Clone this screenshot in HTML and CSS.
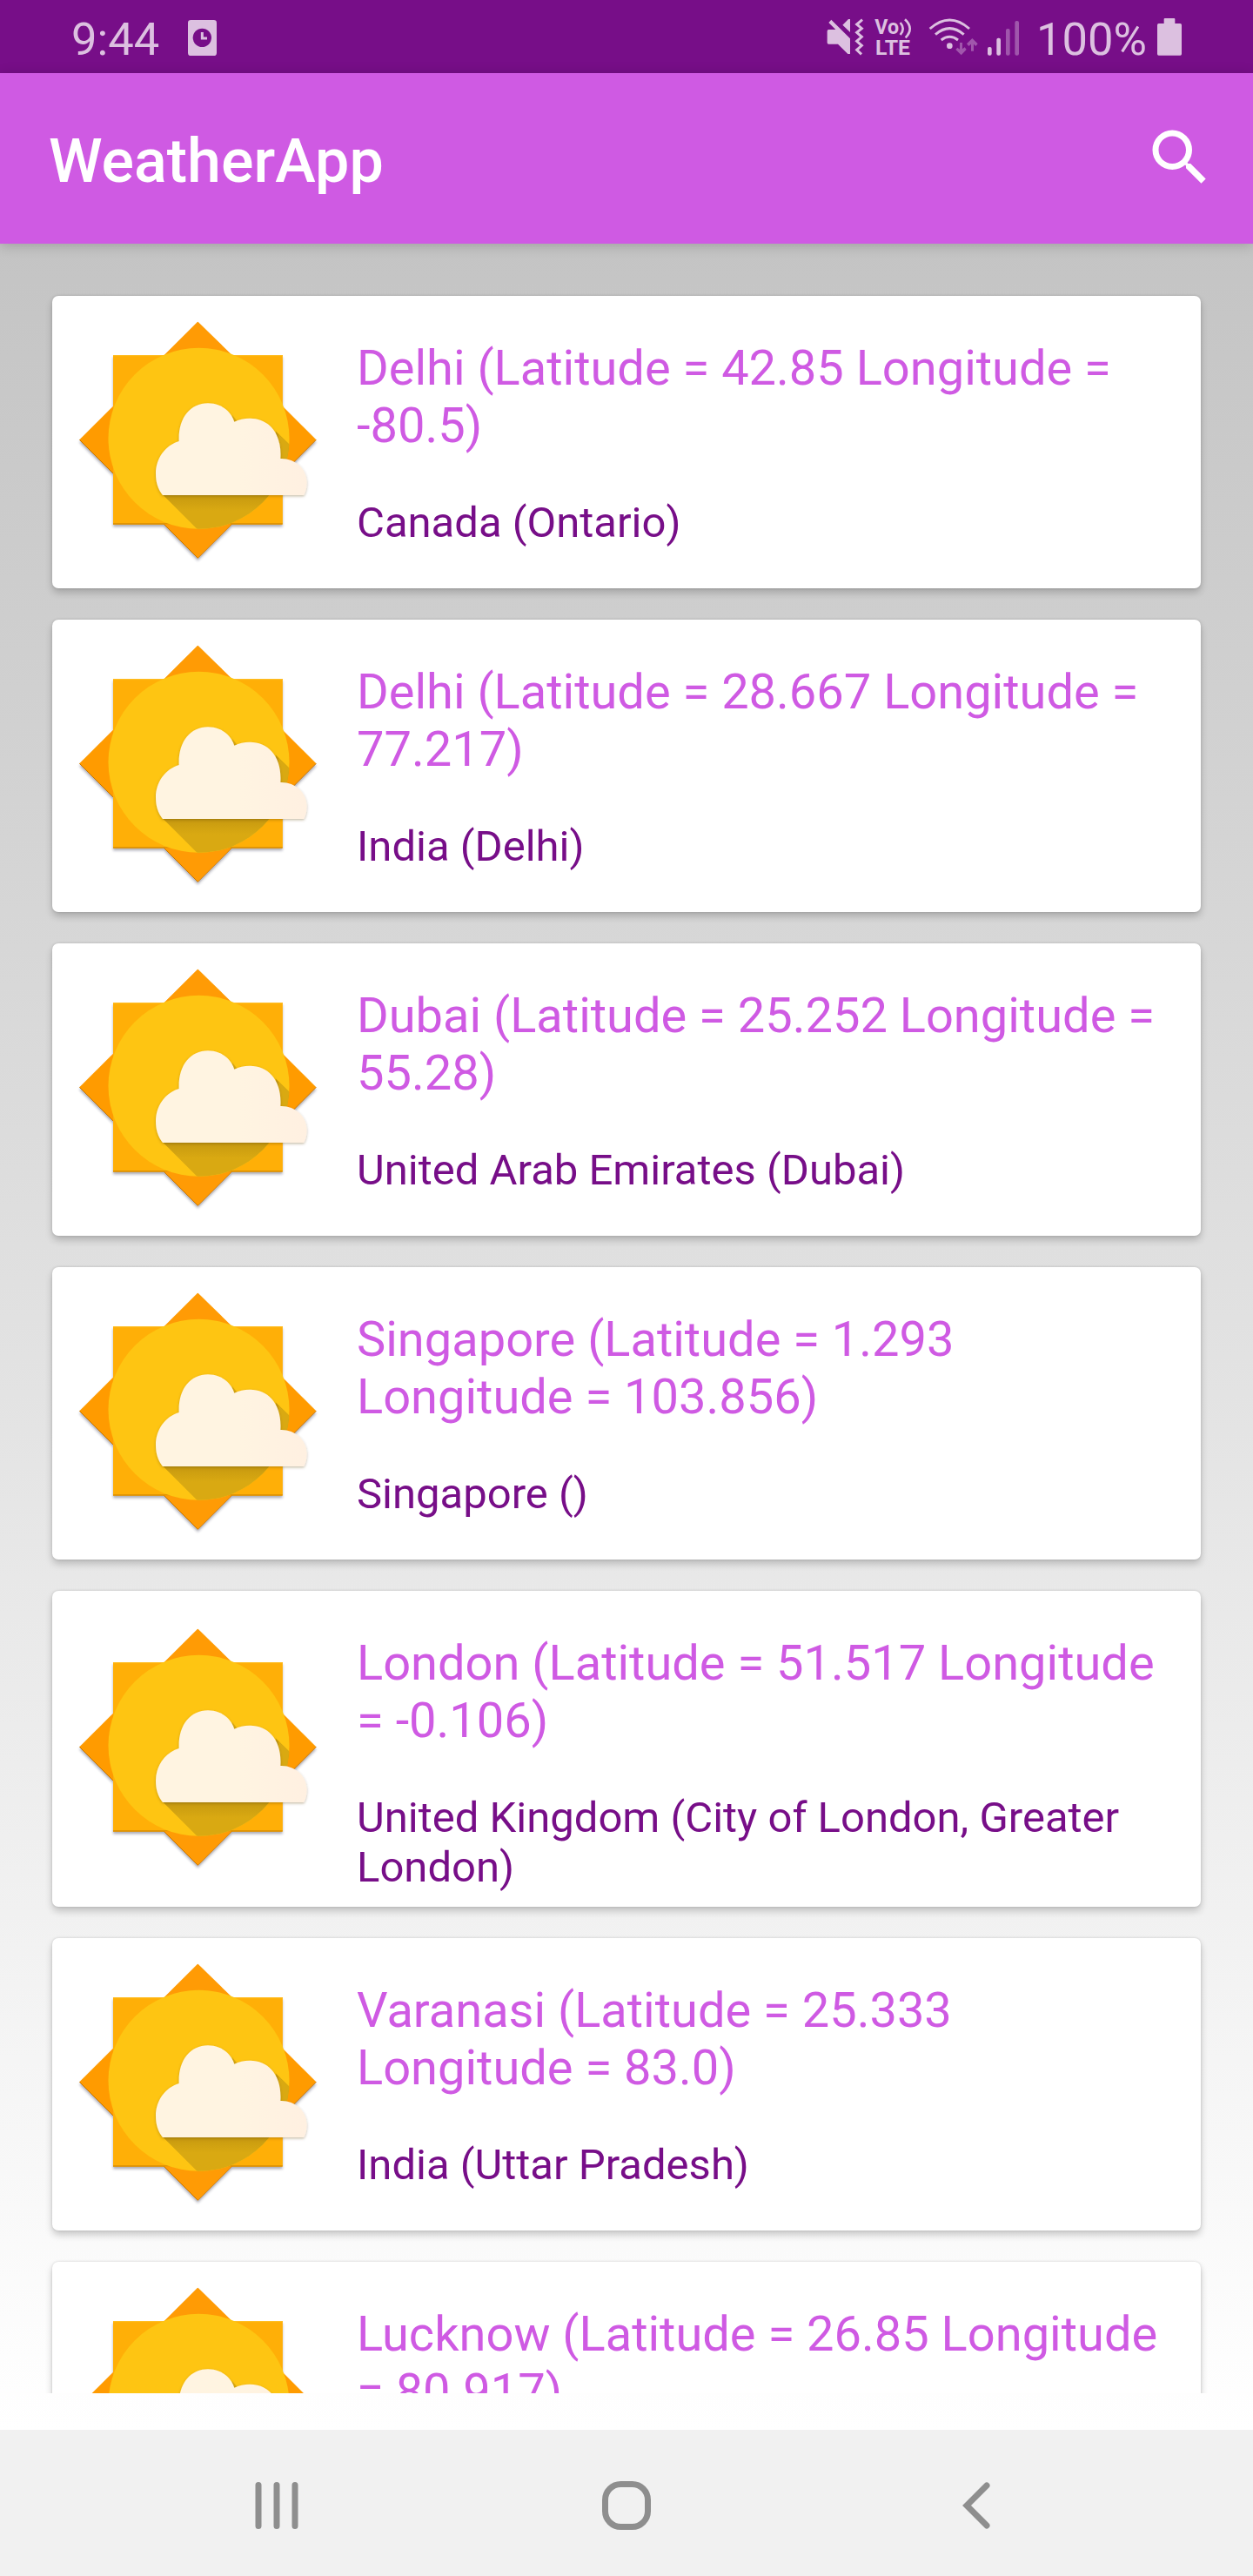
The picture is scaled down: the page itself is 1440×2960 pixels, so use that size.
FILE: index.html
```html
<!DOCTYPE html>
<html lang="en">
<head>
<meta charset="utf-8">
<title>WeatherApp</title>
<link rel="stylesheet" href="styles.css">
</head>
<body>
<svg class="defs" aria-hidden="true">
  <defs>
    <filter id="soft" x="-10%" y="-10%" width="120%" height="125%">
      <feDropShadow dx="0" dy="9" stdDeviation="5" flood-color="#2a2040" flood-opacity="0.38"/>
    </filter>
    <filter id="cloud-shadow" x="-10%" y="-10%" width="120%" height="125%">
      <feDropShadow dx="0" dy="4" stdDeviation="4" flood-color="#5a3c00" flood-opacity="0.35"/>
    </filter>
    <linearGradient id="cloud-fill" x1="0" y1="0" x2="1" y2="0">
      <stop offset="0.55" stop-color="#fff4e1"/>
      <stop offset="1" stop-color="#fff0e1"/>
    </linearGradient>
    <linearGradient id="shade" x1="0" y1="740" x2="0" y2="800" gradientUnits="userSpaceOnUse">
      <stop offset="0" stop-color="#c4970f"/>
      <stop offset="1" stop-color="#d9a912"/>
    </linearGradient>
    <clipPath id="disc"><circle cx="565.500" cy="551.500" r="312"/></clipPath>
    <symbol id="sun" viewBox="144 132 840 864">
      <g filter="url(#soft)">
        <path d="M562 149 970 556 562 964 154 556Z" fill="#ff9b05"/>
        <path d="M270 264H854V847H270Z" fill="#ffaf07"/>
      </g>
      <path d="M154 556 562 964 970 556" fill="none" stroke="#c67500" stroke-width="3"/>
      <path d="M270 264H854V847H270Z" fill="#ffaf07"/>
      <path d="M270 846H854" stroke="#d78b00" stroke-width="4"/>
      <path d="M447 847 562 962 678 847Z" fill="#ff9b05"/>
      <path d="M270 266H854" stroke="#ffc02a" stroke-width="3"/>
      <path d="M447 264 562 149 680 264Z" fill="#ff9b05"/>
      <circle cx="565.500" cy="551.500" r="312" fill="#fec512"/>
      <g clip-path="url(#disc)">
        <path d="M442 746 600 904H900V594L830 526 840 650 800 746Z" fill="url(#shade)"/>
        <path d="M840 536 900 594V640H840Z" fill="#d9a912"/>
        <path d="M680 470 700 494 680 500Z" fill="#d9a912"/>
      </g>
      <path filter="url(#cloud-shadow)" fill="url(#cloud-fill)" d="M441 747C424 726 417 702 417 673C417 620 450 575 497 561C494 482 535 430 597 430C640 430 675 455 688 494C704 486 721 482 742 482C805 482 853 532 847 621C895 619 938 655 938 703C938 720 935 735 928 747Z"/>
    </symbol>
  </defs>
</svg>

<div class="screen">
  <div class="status">
    <span class="clock">9:44</span>
    <svg class="alarm" viewBox="648 69 99 123"><rect x="648" y="69" width="99" height="123" rx="10" fill="currentColor"/><circle cx="697" cy="130" r="32" fill="#770e88"/><path d="M697 111V132H714" fill="none" stroke="currentColor" stroke-width="9"/></svg>
    <div class="indicators">
      <svg class="mute" viewBox="90 63 129 129"><path d="M97 78 106 68 171 133V186H163L129 152H97Q92 152 92 147V107Q92 102 97 102H121ZM145 86 165 66H171V111Z" fill="currentColor"/><path d="M213 68 194 84 211 98 194 112 211 127 194 142 211 157 194 172 210 187" fill="none" stroke="currentColor" stroke-width="9"/></svg>
      <svg class="volte" viewBox="255 63 129 129"><g fill="currentColor" class="volte-text"><text x="256" y="118" textLength="83" lengthAdjust="spacingAndGlyphs">Vo</text><text x="258" y="189" textLength="120" lengthAdjust="spacingAndGlyphs">LTE</text></g><path d="M344 78Q362 99 344 120M360 67Q393 98 362 130" fill="none" stroke="currentColor" stroke-width="8"/></svg>
      <svg class="wifi" viewBox="441 63 171 129"><g fill="none" stroke="currentColor" stroke-width="9"><path d="M446 99Q514 39 582 99"/><path d="M465 119Q514 77 563 119"/><path d="M485 138Q514 116 543 138"/></g><circle cx="514" cy="158" r="10" fill="currentColor"/><path class="dim" d="M549 147H558V169L566 163 572 171 554 190 535 171 541 164 549 170ZM588 176V152L580 159 573 151 592 132 611 151 604 159 597 152V176Z"/></svg>
      <svg class="signal" viewBox="645 63 111 129"><rect x="645" y="162" width="14" height="29" rx="6" fill="currentColor"/><rect x="676" y="131" width="14" height="60" rx="6" fill="currentColor"/><rect class="dim" x="708" y="99" width="14" height="92" rx="6"/><rect class="dim" x="739" y="72" width="14" height="119" rx="6"/></svg>
      <span class="percent">100%</span>
      <svg class="battery" viewBox="1230 63 84 129"><path d="M1256 63H1288Q1291 63 1291 66V81H1309Q1314 81 1314 86V186Q1314 191 1309 191H1235Q1230 191 1230 186V86Q1230 81 1235 81H1253V66Q1253 63 1256 63Z" fill="currentColor"/></svg>
    </div>
  </div>

  <header class="appbar">
    <h1>WeatherApp</h1>
    <svg class="search" viewBox="0 0 24 24"><path fill="#fff" d="M15.500 14h-.79l-.28-.27A6.471 6.471 0 0 0 16 9.500 6.500 6.500 0 1 0 9.500 16c1.610 0 3.090-.59 4.230-1.570l.27.28v.79l5 4.990L20.490 19l-4.990-5zm-6 0C7.010 14 5 11.990 5 9.500S7.010 5 9.500 5 14 7.010 14 9.500 11.990 14 9.500 14z"/></svg>
  </header>

  <main class="content">
    <div class="list">
      <article class="card"><svg class="sun"><use href="#sun"/></svg><div class="info"><h2>Delhi (Latitude = 42.85 Longitude = -80.5)</h2><p>Canada (Ontario)</p></div></article>
      <article class="card"><svg class="sun"><use href="#sun"/></svg><div class="info"><h2>Delhi (Latitude = 28.667 Longitude = 77.217)</h2><p>India (Delhi)</p></div></article>
      <article class="card"><svg class="sun"><use href="#sun"/></svg><div class="info"><h2>Dubai (Latitude = 25.252 Longitude = 55.28)</h2><p>United Arab Emirates (Dubai)</p></div></article>
      <article class="card"><svg class="sun"><use href="#sun"/></svg><div class="info"><h2>Singapore (Latitude = 1.293 Longitude = 103.856)</h2><p>Singapore ()</p></div></article>
      <article class="card"><svg class="sun"><use href="#sun"/></svg><div class="info"><h2>London (Latitude = 51.517 Longitude = -0.106)</h2><p>United Kingdom (City of London, Greater London)</p></div></article>
      <article class="card"><svg class="sun"><use href="#sun"/></svg><div class="info"><h2>Varanasi (Latitude = 25.333 Longitude = 83.0)</h2><p>India (Uttar Pradesh)</p></div></article>
      <article class="card"><svg class="sun"><use href="#sun"/></svg><div class="info"><h2>Lucknow (Latitude = 26.85 Longitude = 80.917)</h2></div></article>
    </div>
  </main>

  <nav class="navbar">
    <svg viewBox="0 0 60 60"><path d="M9 6.500V53.500M30 6.500V53.500M51 6.500V53.500"/></svg>
    <svg viewBox="0 0 60 60"><rect x="5.500" y="5.500" width="49" height="49" rx="18"/></svg>
    <svg viewBox="0 0 60 60"><path d="M42 7 19 30 42 53"/></svg>
  </nav>
</div>
</body>
</html>
```
FILE: styles.css
```css
* { box-sizing: border-box; }

body {
  margin: 0;
  font-family: Roboto, "Liberation Sans", sans-serif;
}

h1, h2, p { margin: 0; font-weight: 400; }

svg { display: block; flex: none; }

.defs { position: absolute; width: 0; height: 0; }

.screen {
  display: flex;
  flex-direction: column;
  width: 1440px;
  height: 2960px;
  overflow: hidden;
}

.status {
  display: flex;
  align-items: center;
  flex: none;
  height: 84px;
  padding: 1px 82px 0 82px;
  background: #770e88;
  color: #dcc0e0;
  font-size: 52.5px;
  line-height: 62px;
}

.clock, .percent { padding-top: 4px; }
.clock { width: 134px; }
.alarm { width: 33px; height: 41px; margin-top: 2px; }

.indicators {
  display: flex;
  align-items: center;
  margin-left: auto;
}

.mute { width: 43px; height: 43px; margin-right: 12px; }
.volte { width: 43px; height: 43px; margin-right: 19px; overflow: visible; }
.volte-text { font-size: 71px; font-weight: 700; }
.wifi { width: 57px; height: 43px; margin-right: 11px; }
.signal { width: 37px; height: 43px; margin-right: 19px; }
.percent { width: 127px; margin-right: 12px; }
.battery { width: 28px; height: 43px; }
.dim { fill: #a056ac; }

.appbar {
  position: relative;
  display: flex;
  align-items: center;
  justify-content: space-between;
  flex: none;
  height: 196px;
  padding: 0 42px 0 56px;
  background: #cf5ae3;
  box-shadow: 0 2px 14px rgba(0, 0, 0, 0.2);
}

.appbar h1 {
  padding-top: 6px;
  color: #fff;
  font-size: 70px;
  font-weight: 500;
  line-height: 82px;
}

.search { width: 84px; height: 84px; margin-bottom: 2px; }

.content {
  flex: 1;
  min-height: 0;
  padding-bottom: 42px;
  background: linear-gradient(#c4c4c4, #fff);
}

.list {
  display: flex;
  flex-direction: column;
  gap: 36px;
  height: 100%;
  padding: 60px 60px 0;
  overflow: hidden;
}

.card {
  display: flex;
  align-items: center;
  flex: none;
  gap: 42px;
  min-height: 336px;
  padding: 0 32px 0 28px;
  border-radius: 7px;
  background: #fff;
  box-shadow: 0 5px 9px rgba(0, 0, 0, 0.2), 0 0 3px rgba(0, 0, 0, 0.14);
}

.sun { width: 280px; height: 288px; }

.info {
  flex: 1;
  align-self: flex-start;
  padding: 50px 0 17px;
}

.info h2 {
  color: #cf5ae3;
  font-size: 56px;
  line-height: 66px;
}

.info p {
  margin-top: 50px;
  color: #770e88;
  font-size: 49px;
  line-height: 57px;
}

.navbar {
  display: flex;
  align-items: center;
  justify-content: center;
  gap: 342px;
  flex: none;
  height: 168px;
  padding-top: 5px;
  background: #f1f1f1;
}

.navbar svg {
  width: 60px;
  height: 60px;
  fill: none;
  stroke: #8e8e8e;
  stroke-width: 7;
  stroke-linecap: round;
}
```
